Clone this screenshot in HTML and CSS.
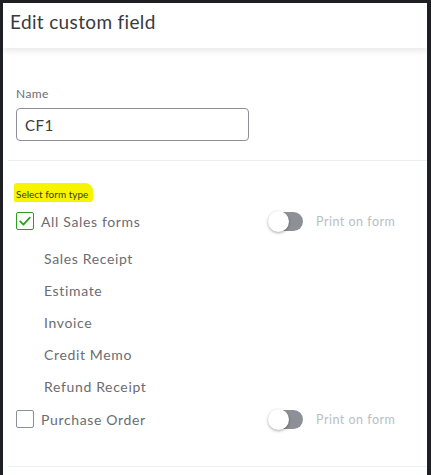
FILE: index.html
```html
<!DOCTYPE html>
<html>
<head>
<meta charset="utf-8">
<link rel="stylesheet" href="styles.css">
</head>
<body>
<div class="frame">
  <div class="panel">
    <header class="head"><h1 class="title">Edit custom field</h1></header>
    <section class="name-sec">
      <label class="lbl">Name</label>
      <div class="input">CF1</div>
    </section>
    <hr class="div">
    <section class="forms">
      <div class="hl">Select form type</div>
      <div class="row">
        <span class="cb checked"><svg width="14" height="14" viewBox="0 0 14 14"><path d="M2.2 7.4 L5.4 10.6 L11.8 3.6" fill="none" stroke="#2ca01c" stroke-width="1.8" stroke-linecap="round" stroke-linejoin="round"/></svg></span>
        <span class="rlabel">All Sales forms</span>
        <span class="toggle"><span class="knob"></span></span>
        <span class="pof">Print on form</span>
      </div>
      <ul class="sub">
        <li>Sales Receipt</li>
        <li>Estimate</li>
        <li>Invoice</li>
        <li>Credit Memo</li>
        <li>Refund Receipt</li>
      </ul>
      <div class="row row2">
        <span class="cb"></span>
        <span class="rlabel">Purchase Order</span>
        <span class="toggle"><span class="knob"></span></span>
        <span class="pof">Print on form</span>
      </div>
    </section>
    <hr class="div div2">
  </div>
</div>
</body>
</html>
```

FILE: styles.css
```css
html, body { margin: 0; padding: 0; }
body {
  width: 431px; height: 475px; overflow: hidden;
  background: #1f2023;
  font-family: Lato, "Noto Sans", "Liberation Sans", sans-serif;
}
.frame { padding: 3px 4px 0 3px; height: 472px; }
.panel { background: #fff; height: 472px; position: relative; }
.head {
  height: 45px;
  box-shadow: 0 3px 6px rgba(0,0,0,0.09);
  position: relative; z-index: 1;
}
.title {
  margin: 0; padding: 7px 0 0 7px;
  font-size: 19px; font-weight: 400; color: #393a3d;
  letter-spacing: 0.35px;
}
.name-sec { padding: 39px 0 0 13px; }
.lbl { display: block; font-size: 12px; color: #6b6c72; line-height: 14px; letter-spacing: 0.4px; }
.input {
  margin-top: 7px;
  width: 223px; height: 31px;
  border: 1px solid #8d9096; border-radius: 4px;
  padding: 0 0 0 8px; box-sizing: content-box;
  font-size: 15px; color: #393a3d; line-height: 32px; letter-spacing: 0.5px;
}
.div { border: 0; border-top: 1px solid #eceef1; margin: 19px 0 0 5px; }
.forms { padding: 0 0 0 13px; position: relative; }
.hl {
  margin-top: 22px; display: inline-block;
  background: #f7f400; padding: 5px 5px 2px 2px; margin-left: -2px;
  font-size: 10px; color: #3d3d2a; line-height: 12px;
  border-radius: 3px 8px 3px 1px;
}
.row { display: flex; align-items: center; height: 22px; margin-top: 8px; }
.cb {
  width: 18px; height: 18px; box-sizing: border-box;
  border: 1px solid #8d9096; border-radius: 2px;
  display: flex; align-items: center; justify-content: center;
}
.cb.checked { border-color: #2ca01c; }
.rlabel { margin-left: 7px; font-size: 14px; color: #6b6c72; width: 228px; letter-spacing: 0.65px; }
.toggle {
  width: 34px; height: 19px; border-radius: 10px; background: #8d9096;
  position: relative;
}
.knob {
  position: absolute; left: -1px; top: -1px;
  width: 21px; height: 21px; border-radius: 50%;
  background: #fff; box-shadow: 0 1px 3px rgba(0,0,0,0.35);
}
.pof { margin-left: 13px; font-size: 12.5px; color: #babec5; letter-spacing: 0.5px; }
.sub { list-style: none; margin: 11px 0 0 28px; padding: 0; }
.sub li { height: 32px; line-height: 32px; font-size: 14px; color: #6b6c72; letter-spacing: 0.65px; }
.row2 { margin-top: 5px; }
.div2 { margin-top: 36px; }
```
